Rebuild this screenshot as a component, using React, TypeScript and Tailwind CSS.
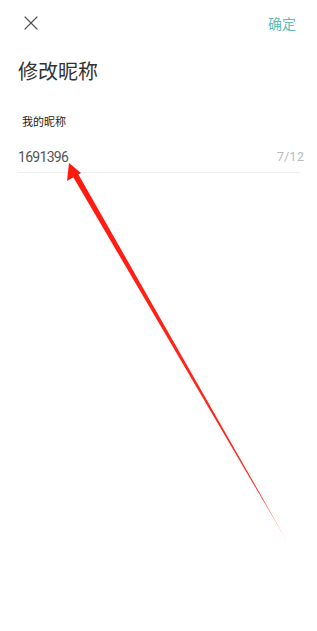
import { X } from 'lucide-react';

const font = { fontFamily: '"Noto Sans CJK SC", "Noto Sans", sans-serif' };
const digits = { fontFamily: 'Roboto, "Noto Sans", sans-serif' };

const App = () => {
  return (
    <div className="relative w-[317px] h-[631px] bg-white overflow-hidden" style={font}>
      {/* header */}
      <div className="flex items-center justify-between h-[46px] pl-[19px] pr-[21px]">
        <X size={24} strokeWidth={1.2} className="text-[#555]" />
        <span className="text-[14px] text-[#5cbdb2]">确定</span>
      </div>

      <div className="pl-[18px] pr-[17px]">
        <h1 className="text-[20px] text-[#333] leading-[28px] mt-[11px]">修改昵称</h1>

        <div className="mt-[28px] pl-[4px] text-[11px] text-[#222] leading-[16px]">我的昵称</div>

        <div className="flex items-center justify-between mt-[17px] pb-[4px] border-b border-[#eeeeee]">
          <span className="text-[14px] tracking-[-0.7px] text-[#555] leading-[22px]" style={digits}>1691396</span>
          <span className="text-[13px] text-[#bbbbbb] -mr-[4px]" style={digits}>7/12</span>
        </div>
      </div>

      {/* annotation arrow */}
      <svg className="absolute inset-0 pointer-events-none" width="317" height="631">
        <defs>
          <linearGradient id="fade" x1="74" y1="176" x2="291" y2="548" gradientUnits="userSpaceOnUse">
            <stop offset="0" stopColor="#ff1a10" />
            <stop offset="0.85" stopColor="#ff2a20" />
            <stop offset="1" stopColor="#ff2a20" stopOpacity="0.1" />
          </linearGradient>
        </defs>
        <polygon points="72,175 77,172 291,548" fill="url(#fade)" />
        <polygon points="69,163 67,181 81,173" fill="#ff1a10" />
      </svg>
    </div>
  );
};

export default App;
